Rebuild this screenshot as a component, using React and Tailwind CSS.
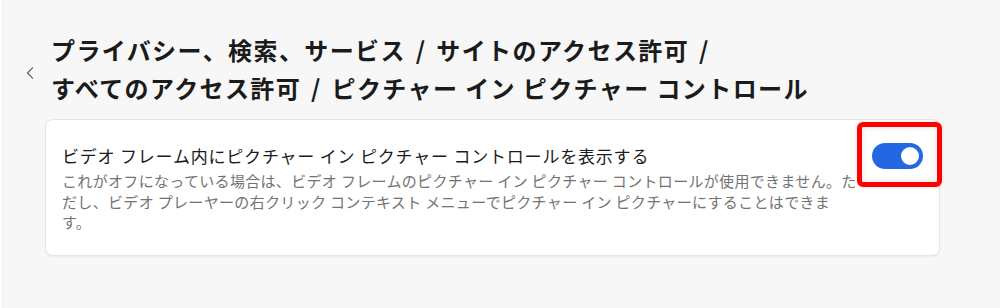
export default function App() {
  return (
    <div className="w-full h-[308px] bg-[#f7f7f7] flex overflow-hidden font-['Noto_Sans_CJK_JP','Noto_Sans',sans-serif]">
      <div className="w-[3px] h-full bg-[#fdfdfd] border-r border-[#f0f0f0]" />
      <div className="flex-1 flex flex-col pt-[31px]">
        <div className="flex items-start pl-[23px]">
          <svg className="mt-[36px] w-[8px] h-[12px] shrink-0" viewBox="0 0 8 12" fill="none">
            <path d="M6.5 0.8 L1.5 6 L6.5 11.2" stroke="#5f5f5f" strokeWidth="1.2" strokeLinecap="round" strokeLinejoin="round" />
          </svg>
          <h1 className="ml-[17px] text-[24px] leading-[38px] font-bold tracking-[1.4px] text-[#1b1b1b] whitespace-nowrap">
            プライバシー、検索、サービス <span className="mx-[3px]">/</span> サイトのアクセス許可 <span className="mx-[3px]">/</span>
            <br />
            すべてのアクセス許可 <span className="mx-[3px]">/</span> ピクチャー イン ピクチャー コントロール
          </h1>
        </div>
        <div className="mt-[12px] ml-[42px] w-[895px] bg-white rounded-[8px] border border-[#e6e6e6] shadow-[0_1px_2px_rgba(0,0,0,0.06)] flex items-start gap-[12px] px-[16px] pt-[24px] pb-[22px]">
          <div className="flex-1 min-w-0">
            <div className="text-[17px] leading-[24px] tracking-[0.8px] text-[#1b1b1b] whitespace-nowrap">
              ビデオ フレーム内にピクチャー イン ピクチャー コントロールを表示する
            </div>
            <div className="mt-[3px] text-[15px] leading-[20.5px] tracking-[0.33px] text-[#737373] whitespace-nowrap">
              これがオフになっている場合は、ビデオ フレームのピクチャー イン ピクチャー コントロールが使用できません。た
              <br />
              だし、ビデオ プレーヤーの右クリック コンテキスト メニューでピクチャー イン ピクチャーにすることはできま
              <br />
              す。
            </div>
          </div>
          <div className="h-[24px] flex items-center shrink-0">
            <div className="relative w-[51px] h-[26px] rounded-full bg-[#2467e2]">
              <div className="absolute right-[4px] top-[4px] w-[18px] h-[18px] rounded-full bg-white" />
              <div className="absolute left-[-15px] top-[-21px] w-[85px] h-[65px] border-[5px] border-[#ff0000] rounded-[6px] shadow-[inset_0_0_6px_rgba(0,0,0,0.12),0_0_3px_rgba(0,0,0,0.15)]" />
            </div>
          </div>
        </div>
      </div>
    </div>
  );
}
